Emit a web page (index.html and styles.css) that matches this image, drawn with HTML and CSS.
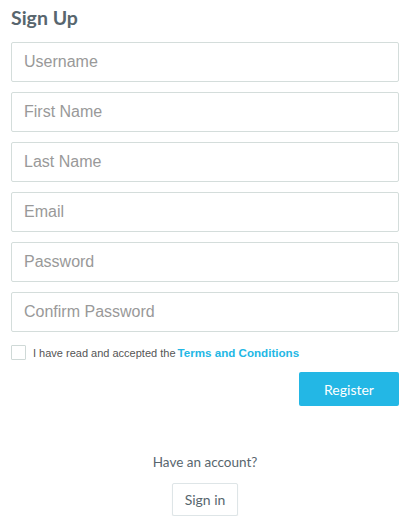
FILE: index.html
```html
<!DOCTYPE html>
<html>
<head>
<meta charset="utf-8">
<link rel="stylesheet" href="styles.css">
</head>
<body>
<div class="page">
  <h1 class="title">Sign Up</h1>
  <form class="form">
    <input class="field" type="text" placeholder="Username">
    <input class="field" type="text" placeholder="First Name">
    <input class="field" type="text" placeholder="Last Name">
    <input class="field" type="text" placeholder="Email">
    <input class="field" type="password" placeholder="Password">
    <input class="field" type="password" placeholder="Confirm Password">
    <label class="terms">
      <span class="box"></span>
      <span class="terms-text">I have read and accepted the <a class="terms-link">Terms and Conditions</a></span>
    </label>
    <div class="actions">
      <button class="btn-primary" type="button">Register</button>
    </div>
  </form>
  <div class="footer">
    <p class="have">Have an account?</p>
    <button class="btn-default" type="button">Sign in</button>
  </div>
</div>
</body>
</html>
```

FILE: styles.css
```css
html, body {
  margin: 0;
  padding: 0;
  background: #fff;
}
.page {
  padding: 0 11px;
  font-family: Lato, "Open Sans", sans-serif;
  color: #58666e;
}
.title {
  margin: 6px 0 12px;
  font-size: 19.5px;
  line-height: 24px;
  font-weight: 700;
  color: #58666e;
}
.form {
  display: flex;
  flex-direction: column;
}
.field {
  box-sizing: border-box;
  height: 40px;
  width: 100%;
  margin: 0 0 10px;
  padding: 0 12px;
  border: 1px solid #d4dddb;
  border-radius: 2px;
  font-family: "Liberation Sans", Arial, sans-serif;
  font-size: 16px;
  color: #333;
  outline: none;
}
.field::placeholder {
  color: #999;
}
.field:last-of-type {
  margin-bottom: 13px;
}
.terms {
  display: flex;
  align-items: center;
  height: 14px;
}
.box {
  box-sizing: border-box;
  width: 15px;
  height: 15px;
  border: 1px solid #cfd9d7;
  border-radius: 1px;
  margin-right: 7px;
}
.terms-text {
  font-family: "Liberation Sans", Arial, sans-serif;
  font-size: 11px;
  color: #555;
}
.terms-link {
  font-size: 11.6px;
  font-weight: 700;
  color: #23b7e5;
  margin-left: -1px;
}
.actions {
  display: flex;
  justify-content: flex-end;
  margin-top: 13px;
}
.btn-primary {
  width: 100px;
  height: 34px;
  border: none;
  border-radius: 2px;
  background: #23b7e5;
  color: #fff;
  font-family: Lato, "Open Sans", sans-serif;
  font-size: 14px;
  cursor: pointer;
}
.footer {
  display: flex;
  flex-direction: column;
  align-items: center;
  margin-top: 46px;
}
.have {
  margin: 0 0 11px;
  font-size: 13.5px;
  line-height: 20px;
}
.btn-default {
  height: 33px;
  padding: 0 12px;
  background: #fff;
  border: 1px solid #dee5e7;
  border-radius: 2px;
  box-shadow: 0 1px 1px rgba(90, 90, 90, 0.1);
  color: #58666e;
  font-family: Lato, "Open Sans", sans-serif;
  font-size: 14px;
}
```
